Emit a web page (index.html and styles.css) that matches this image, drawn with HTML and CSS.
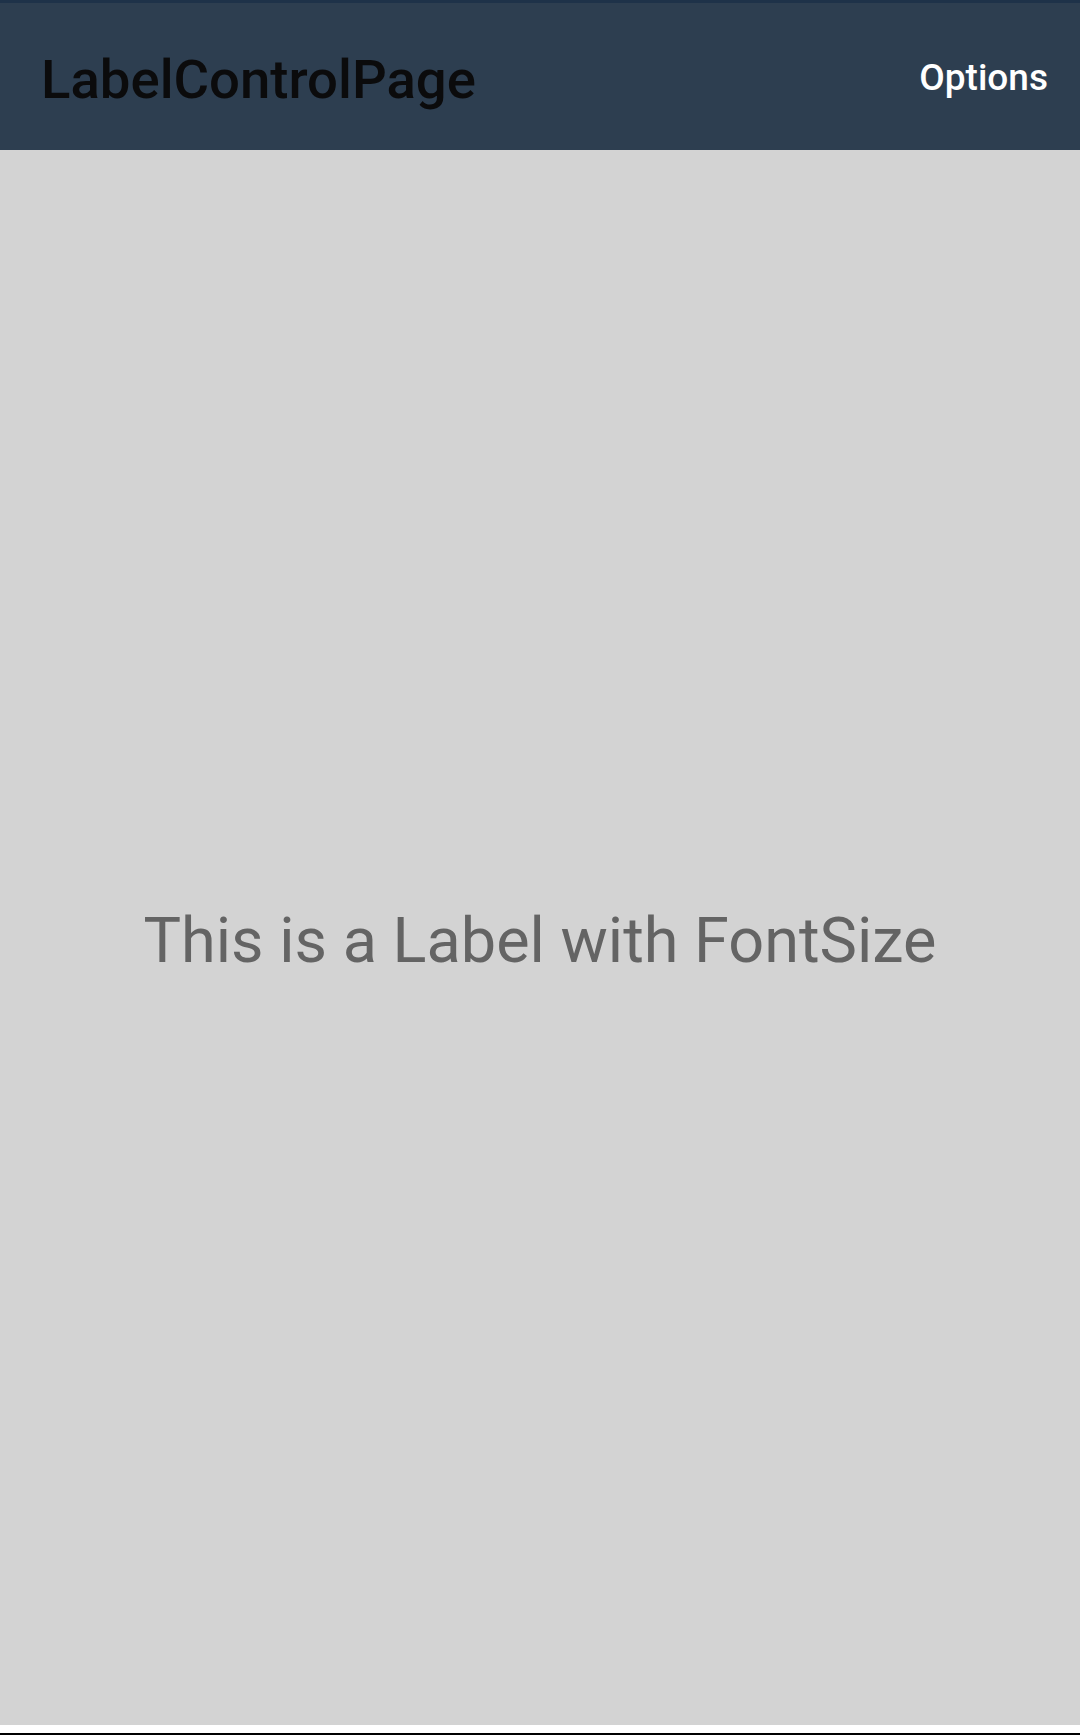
FILE: index.html
```html
<!DOCTYPE html>
<html>
<head>
<meta charset="utf-8">
<link rel="stylesheet" href="styles.css">
</head>
<body>
<div class="app">
  <div class="status-strip"></div>
  <header class="toolbar">
    <div class="toolbar-title">LabelControlPage</div>
    <div class="toolbar-action">Options</div>
  </header>
  <main class="content">
    <div class="label">This is a Label with FontSize</div>
  </main>
  <div class="bottom-bar"></div>
</div>
</body>
</html>
```
FILE: styles.css
```css
html, body {
  margin: 0;
  padding: 0;
  background: #ffffff;
}
.app {
  width: 1080px;
  height: 1735px;
  display: flex;
  flex-direction: column;
  font-family: Roboto, "Liberation Sans", sans-serif;
}
.status-strip {
  height: 3px;
  background: #1e3249;
  flex: none;
}
.toolbar {
  height: 147px;
  flex: none;
  background: #2d3e50;
  display: flex;
  align-items: center;
  justify-content: space-between;
  padding: 0 32px 0 41px;
}
.toolbar-title {
  font-size: 54.5px;
  font-weight: 500;
  color: #0b0b0c;
  padding-top: 4px;
}
.toolbar-action {
  font-size: 37px;
  font-weight: 500;
  color: #ffffff;
  padding-top: 1px;
}
.content {
  height: 1575px;
  flex: none;
  background: #d3d3d3;
  display: flex;
  align-items: center;
  justify-content: center;
}
.label {
  font-size: 63px;
  color: #646464;
  padding-top: 5px;
}
.bottom-bar {
  height: 8px;
  flex: none;
  background: #ffffff;
  border-bottom: 2px solid #000000;
}
```
